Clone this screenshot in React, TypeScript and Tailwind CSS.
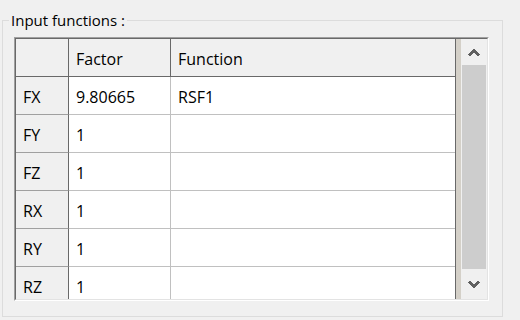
const rows = [
  { name: 'FX', factor: '9.80665', fn: 'RSF1' },
  { name: 'FY', factor: '1', fn: '' },
  { name: 'FZ', factor: '1', fn: '' },
  { name: 'RX', factor: '1', fn: '' },
  { name: 'RY', factor: '1', fn: '' },
  { name: 'RZ', factor: '1', fn: '' },
];

function Chevron({ down }: { down?: boolean }) {
  return (
    <svg width="12" height="8" viewBox="0 0 12 8" shapeRendering="crispEdges">
      <polyline
        points={down ? '1,1.5 6,6.5 11,1.5' : '1,6.5 6,1.5 11,6.5'}
        fill="none"
        stroke="#606060"
        strokeWidth="2.4"
      />
    </svg>
  );
}

export default function App() {
  return (
    <div
      className="w-[520px] h-[320px] bg-[#f0f0f0] overflow-hidden text-black"
      style={{ fontFamily: '"Open Sans", "Noto Sans", sans-serif' }}
    >
      <fieldset className="ml-[2px] mt-[10px] w-[501px] h-[307px] border border-[#dcdcdc] p-0 m-0">
        <legend className="ml-[6px] px-[2px] text-[15px] leading-[20px]">Input functions :</legend>

        {/* grid */}
        <div className="ml-[11px] mt-[7px] w-[475px] h-[264px] border-t border-l border-[#a0a0a0] border-r-white border-b-white border-r border-b">
          <div className="flex h-full border-t border-l border-[#696969] border-r-[#e3e3e3] border-b-[#e3e3e3] border-r border-b">
            <div className="w-[440px] h-full overflow-hidden border-r border-[#696969] text-[16px]">
              {/* header */}
              <div className="flex h-[38px] bg-[#f0f0f0] border-b border-[#696969]">
                <div className="w-[53px] border-r border-[#696969]" />
                <div className="w-[102px] border-r border-[#696969] flex items-center pt-[3px] pl-[7px] leading-[20px]">
                  Factor
                </div>
                <div className="flex-1 flex items-center pt-[3px] pl-[7px] leading-[20px]">Function</div>
              </div>
              {rows.map((r) => (
                <div key={r.name} className="flex h-[38px]">
                  <div className="w-[53px] bg-[#f0f0f0] border-r border-b border-r-[#696969] border-b-[#a0a0a0] flex items-center pt-[3px] pl-[7px] leading-[20px]">
                    {r.name}
                  </div>
                  <div className="w-[102px] bg-white border-r border-b border-[#c0c0c0] flex items-center pt-[3px] pl-[7px] leading-[20px]">
                    {r.factor}
                  </div>
                  <div className="flex-1 bg-white border-b border-[#c0c0c0] flex items-center pt-[3px] pl-[7px] leading-[20px]">
                    {r.fn}
                  </div>
                </div>
              ))}
            </div>
            <div className="w-[5px] h-full bg-[#d4d0c8]" />
            {/* scrollbar */}
            <div className="w-[26px] h-full bg-[#f0f0f0] flex flex-col">
              <div className="h-[26px] flex items-center justify-center pt-[2px]">
                <Chevron />
              </div>
              <div className="mx-[1px] h-[204px] bg-[#cdcdcd]" />
              <div className="flex-1 flex items-center justify-center">
                <Chevron down />
              </div>
            </div>
          </div>
        </div>
      </fieldset>
    </div>
  );
}
